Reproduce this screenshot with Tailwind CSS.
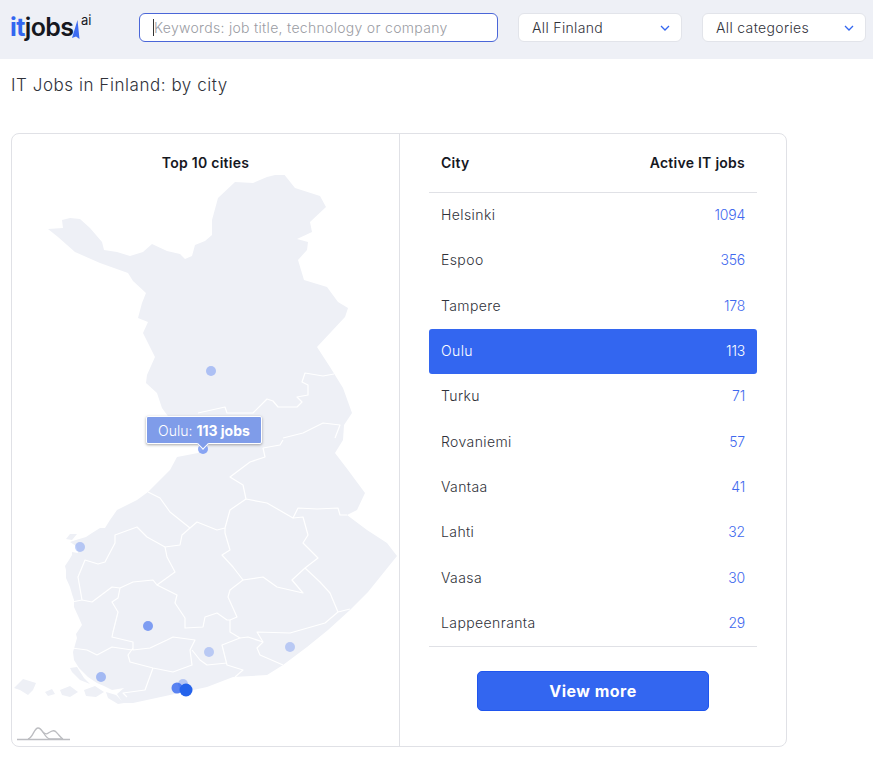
<!DOCTYPE html>
<html lang="en">

<head>
    <meta charset="UTF-8" />
    <meta name="viewport" content="width=device-width, initial-scale=1.0" />
    <title>IT Jobs in Finland: by city</title>
    <script src="https://cdn.jsdelivr.net/npm/@tailwindcss/browser@4"></script>
</head>

<body class="bg-white font-['Inter',sans-serif] text-[#30323a]">
    <!-- header -->
    <header class="h-[59px] bg-[#eef0f6] flex items-center pl-[10px] pr-[7px] pb-[4px]">
        <a class="relative w-[129px] h-[30px] shrink-0 flex items-center font-semibold text-[25px] tracking-[-0.6px] text-[#16181f]">
            <span class="text-[#3366f0] font-bold">it</span><span>jobs</span>
            <svg class="absolute left-[59px] top-[4px]" width="14" height="24" viewBox="0 0 14 24">
                <polygon points="3,21 8.500,3 10.500,22 7,19.500" fill="#3d6cf2" />
            </svg>
            <span class="absolute left-[71px] top-[-2px] text-[13px] font-normal tracking-normal">ai</span>
        </a>
        <div class="relative w-[359px] h-[29px] shrink-0">
            <input class="w-full h-full rounded-[6px] border border-[#4a66d8] bg-white pl-[14px] text-[14px] tracking-[0.3px] font-light placeholder:text-[#9a9ca3]" placeholder="Keywords: job title, technology or company" />
            <span class="absolute left-[14px] top-[6px] w-px h-[17px] bg-[#333]"></span>
        </div>
        <div class="ml-[20px] w-[164px] h-[29px] shrink-0 rounded-[6px] border border-[#e2e4ea] bg-white flex items-center justify-between pl-[13px] pr-[11px] text-[14px] tracking-[0.35px] font-light">
            All Finland
            <svg width="10" height="6" viewBox="0 0 10 6" fill="none" stroke="#3366f0" stroke-width="1.3"><path d="M1 1l4 4 4-4" /></svg>
        </div>
        <div class="ml-[20px] w-[164px] h-[29px] shrink-0 rounded-[6px] border border-[#e2e4ea] bg-white flex items-center justify-between pl-[13px] pr-[11px] text-[14px] tracking-[0.35px] font-light">
            All categories
            <svg width="10" height="6" viewBox="0 0 10 6" fill="none" stroke="#3366f0" stroke-width="1.3"><path d="M1 1l4 4 4-4" /></svg>
        </div>
    </header>

    <h1 class="pl-[11px] pt-[14px] h-[74px] text-[17px] leading-6 font-light tracking-[0.55px]">IT Jobs in Finland: by city</h1>

    <!-- card -->
    <div class="ml-[11px] w-[776px] h-[614px] rounded-[8px] border border-[#e0e1e6] flex">
        <!-- map side -->
        <div class="relative w-[388px] border-r border-[#e0e1e6]">
            <h2 class="pt-[19px] h-[41px] text-center text-[14px] leading-5 font-semibold tracking-[0.25px] text-[#16181f]">Top 10 cities</h2>
            <svg class="block" width="387" height="571" viewBox="12 175 387 571">
                <path fill="#eef0f6" d="M48 229L63 228L62 220L70 218L80 219L90 228L102 242L104 250L117 252L130 256L143 252L152 244L167 251L180 254L185 259L192 256L195 245L205 241L212 235L212 220L218 198L235 182L253 183L267 177L283 173L295 188L320 196L326 207L310 222L312 232L297 239L308 242L307 250L298 260L304 280L327 287L338 302L348 308L345 317L317 347L330 367L343 388L352 413L344 425L343 440L335 453L348 470L365 493L357 510L347 515L367 530L387 543L397 556L368 592L350 610L328 630L307 647L283 665L267 675L233 677L207 687L170 695L133 703L123 703L117 694L124 688L112 690L104 686L97 683L88 677L79 668L74 660L73 652L77 638L76 634L82 625L79 618L74 607L74 600L72 594L70 587L66 578L66 570L65 566L69 560L72 555L72 552L78 553L76 546L70 542L76 540L86 537L92 533L100 528L105 528L110 520L117 510L137 500L148 492L170 470L177 457L198 453L205 447L190 440L178 430L162 408L157 393L146 383L147 375L155 357L143 333L148 322L138 318L142 303L146 293L133 281L128 273L100 263L75 252L58 237Z" />
                <g fill="#eef0f6">
                    <polygon points="14,688 23,679 36,683 33,690 28,695 20,690" />
                    <polygon points="45,692 52,689 55,694 48,696" />
                    <polygon points="60,690 70,686 78,692 70,697 62,695" />
                    <polygon points="70,668 77,667 84,678 90,684 80,680 72,672" />
                    <polygon points="84,690 95,686 104,692 96,697 86,696" />
                    <polygon points="106,692 116,695 124,703 118,704 108,698" />
                    <polygon points="66,539 70,534 77,534 72,540" />
                </g>
                <g fill="none" stroke="#fff" stroke-width="1.2" stroke-linejoin="round">
                    <path d="M198 413L225 407L227 413L253 413L267 399L273 401L278 407L297 407L302 402L297 397L308 395L308 385L302 382L305 373L323 376L334 374" />
                    <path d="M283 438L303 433L323 423L340 425L335 438" />
                    <path d="M283 440L280 445L263 448L265 457L250 462L230 477L243 485L246 499" />
                    <path d="M148 492L160 498L170 512L190 528L197 522L217 530L225 528L230 510L246 499L267 503L293 518L298 508L317 509L338 508L340 515L347 515" />
                    <path d="M190 528L182 535L180 545L165 547L147 537L137 527L115 535L115 543L105 562L98 564L85 560L78 577L82 600L72 602" />
                    <path d="M82 600L92 602L112 587L120 588L118 598L112 602L118 612L113 632L112 637L133 642L133 650L150 648L167 640L173 637L195 640L190 650L192 665L173 672L153 668L130 662L128 655L133 648" />
                    <path d="M120 588L133 582L153 580L157 585L175 572L167 557L165 547" />
                    <path d="M157 585L177 595L175 603L185 618L185 628L203 627L205 617L217 613L227 620L230 620L237 617L228 597L230 590L243 580L233 567L222 555L230 550L225 533L225 528" />
                    <path d="M243 580L263 577L277 587L303 593L292 580L305 568L318 558L303 543L308 535L303 517L293 518" />
                    <path d="M305 568L320 582L330 593L338 612L350 609" />
                    <path d="M338 612L325 623L290 633L257 632L263 642L257 648L260 655L283 665" />
                    <path d="M230 620L230 632L240 638L222 645L227 665L243 670L235 677" />
                    <path d="M240 638L248 637L263 642" />
                    <path d="M192 650L200 660L207 665L227 663" />
                    <path d="M72 648L87 650L97 655L112 647L132 650" />
                    <path d="M153 668L145 690L123 693L127 697" />
                </g>
                <circle cx="211" cy="371" r="5" fill="#3366f0" fill-opacity="0.35" />
                <circle cx="203" cy="449" r="5" fill="#3366f0" fill-opacity="0.55" />
                <circle cx="80" cy="547" r="5" fill="#3366f0" fill-opacity="0.3" />
                <circle cx="148" cy="626" r="5" fill="#3366f0" fill-opacity="0.6" />
                <circle cx="209" cy="652" r="5" fill="#3366f0" fill-opacity="0.28" />
                <circle cx="290" cy="647" r="5" fill="#3366f0" fill-opacity="0.28" />
                <circle cx="101" cy="677" r="5" fill="#3366f0" fill-opacity="0.4" />
                <circle cx="183" cy="684" r="5" fill="#3366f0" fill-opacity="0.3" />
                <circle cx="177" cy="688" r="5.5" fill="#3366f0" fill-opacity="0.8" />
                <circle cx="186" cy="690" r="6.500" fill="#2563eb" />
                <!-- map credit mark -->
                <g fill="none" stroke="#bcbdc1" stroke-width="1.3">
                    <path d="M17 739.500H70" />
                    <path d="M28 739C33 738 34 728 38 728C43 728 44 738 50 739C54 739 58 739 63 739" />
                    <path d="M43 732C46 736 48 733 50 732C53 730 55 730 57 733C59 735 61 738 63 739" />
                </g>
            </svg>
            <!-- tooltip -->
            <div class="absolute left-[134px] top-[282px] w-[116px] h-[28px] rounded-[2px] border border-white bg-[#7f9ce9] shadow-[0_1px_3px_rgba(0,0,0,0.35)] flex items-center justify-center text-[14px] text-white font-light">
                <span>Oulu:&nbsp;<b class="font-bold">113 jobs</b></span>
                <span class="absolute left-[52px] top-[23px] w-[8px] h-[8px] rotate-45 bg-[#7f9ce9] border-r border-b border-white"></span>
            </div>
        </div>

        <!-- table side -->
        <div class="flex-1 px-[29px]">
            <div class="h-[59px] border-b border-[#e0e1e6] px-[12px] pb-[2px] flex items-center justify-between text-[14px] font-semibold tracking-[0.25px] text-[#16181f]">
                <span>City</span><span>Active IT jobs</span>
            </div>
            <div class="h-[454px] flex flex-col text-[14px] font-light tracking-[0.4px] border-b border-[#e0e1e6]">
                <div class="flex-1 px-[12px] pb-[2px] flex items-center justify-between"><span>Helsinki</span><span class="text-[#3f69ee] tracking-[-0.2px]">1094</span></div>
                <div class="flex-1 px-[12px] pb-[2px] flex items-center justify-between"><span>Espoo</span><span class="text-[#3f69ee] tracking-[-0.2px]">356</span></div>
                <div class="flex-1 px-[12px] pb-[2px] flex items-center justify-between"><span>Tampere</span><span class="text-[#3f69ee] tracking-[-0.2px]">178</span></div>
                <div class="flex-1 px-[12px] pb-[2px] flex items-center justify-between rounded-[3px] bg-[#3366f0] text-white"><span>Oulu</span><span class="tracking-[-0.2px]">113</span></div>
                <div class="flex-1 px-[12px] pb-[2px] flex items-center justify-between"><span>Turku</span><span class="text-[#3f69ee] tracking-[-0.2px]">71</span></div>
                <div class="flex-1 px-[12px] pb-[2px] flex items-center justify-between"><span>Rovaniemi</span><span class="text-[#3f69ee] tracking-[-0.2px]">57</span></div>
                <div class="flex-1 px-[12px] pb-[2px] flex items-center justify-between"><span>Vantaa</span><span class="text-[#3f69ee] tracking-[-0.2px]">41</span></div>
                <div class="flex-1 px-[12px] pb-[2px] flex items-center justify-between"><span>Lahti</span><span class="text-[#3f69ee] tracking-[-0.2px]">32</span></div>
                <div class="flex-1 px-[12px] pb-[2px] flex items-center justify-between"><span>Vaasa</span><span class="text-[#3f69ee] tracking-[-0.2px]">30</span></div>
                <div class="flex-1 px-[12px] pb-[2px] flex items-center justify-between"><span>Lappeenranta</span><span class="text-[#3f69ee] tracking-[-0.2px]">29</span></div>
            </div>
            <button class="block mx-auto mt-[24px] w-[232px] h-[40px] rounded-[5px] bg-[#3366f0] border border-[#1f55ee] text-white text-[16px] font-bold tracking-[0.5px]">View more</button>
        </div>
    </div>
</body>

</html>
